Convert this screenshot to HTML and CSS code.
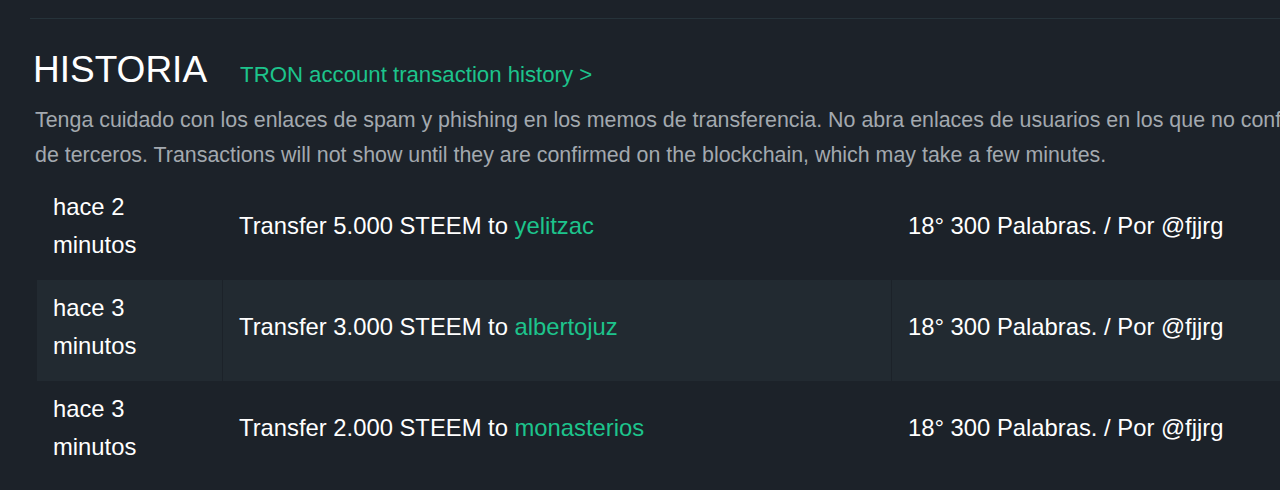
FILE: index.html
```html
<!DOCTYPE html>
<html lang="es">
<head>
<meta charset="utf-8">
<title>Historia</title>
<link rel="stylesheet" href="styles.css">
</head>
<body>
<div class="page">
  <hr class="sep">
  <div class="head">
    <h2 class="title">HISTORIA</h2>
    <a class="tron" href="#">TRON account transaction history &gt;</a>
  </div>
  <p class="note">Tenga cuidado con los enlaces de spam y phishing en los memos de transferencia. No abra enlaces de usuarios en los que no confíe. No proporcione sus claves privadas a ningún sitio web<br>de terceros. Transactions will not show until they are confirmed on the blockchain, which may take a few minutes.</p>
  <table class="hist">
    <tbody>
      <tr>
        <td class="c-time">hace 2<br>minutos</td>
        <td class="c-op">Transfer 5.000 STEEM to <a class="acct" href="#">yelitzac</a></td>
        <td class="c-memo">18° 300 Palabras. / Por @fjjrg</td>
      </tr>
      <tr>
        <td class="c-time">hace 3<br>minutos</td>
        <td class="c-op">Transfer 3.000 STEEM to <a class="acct" href="#">albertojuz</a></td>
        <td class="c-memo">18° 300 Palabras. / Por @fjjrg</td>
      </tr>
      <tr>
        <td class="c-time">hace 3<br>minutos</td>
        <td class="c-op">Transfer 2.000 STEEM to <a class="acct" href="#">monasterios</a></td>
        <td class="c-memo">18° 300 Palabras. / Por @fjjrg</td>
      </tr>
    </tbody>
  </table>
</div>
</body>
</html>
```
FILE: styles.css
```css
html, body {
  margin: 0;
  padding: 0;
  background: #1c2229;
  overflow: hidden;
  height: 490px;
}
body {
  font-family: "Liberation Sans", Arial, sans-serif;
  color: #ffffff;
}
.page {
  margin-left: 30px;
  width: 2200px;
  padding-top: 18px;
}
.sep {
  margin: 0;
  border: 0;
  height: 1px;
  background: #26333a;
}
.head {
  display: flex;
  align-items: baseline;
  gap: 33px;
  margin-top: 29px;
  padding-left: 3px;
}
.title {
  margin: 0;
  font-size: 37px;
  line-height: 44px;
  font-weight: normal;
  color: #ffffff;
}
.tron {
  font-size: 22.2px;
  color: #1dc48c;
  text-decoration: none;
}
.note {
  margin: 11px 0 0;
  padding-left: 5px;
  font-size: 21.4px;
  line-height: 35px;
  color: #a3a9af;
  white-space: nowrap;
}
.hist {
  margin-top: 6px;
  margin-left: 7px;
  border-collapse: collapse;
  font-size: 23.8px;
  line-height: 38px;
  color: #ffffff;
}
.hist td {
  padding: 9px 16px 16px;
  vertical-align: middle;
  white-space: nowrap;
}
.hist tr:nth-child(even) td {
  background: #222a31;
}
.hist td + td {
  border-left: 1px solid #1c2229;
}
.c-time {
  width: 153px;
  white-space: normal;
}
.c-op {
  width: 636px;
  padding-left: 16px;
}
.c-memo {
  width: 500px;
  padding-left: 20px;
}
.acct {
  color: #1dc48c;
  text-decoration: none;
}
```
